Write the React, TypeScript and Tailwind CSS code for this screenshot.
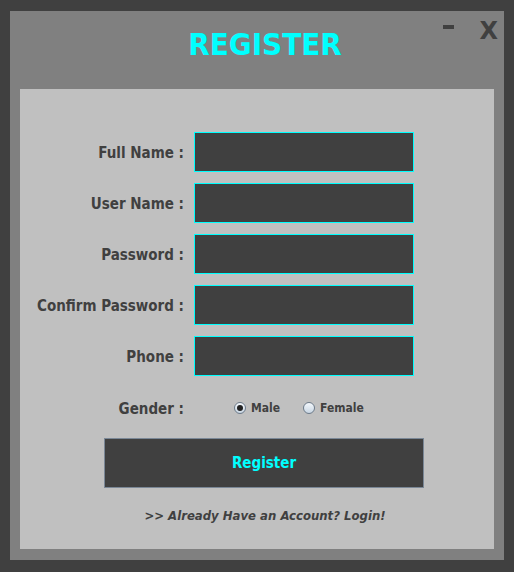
const fields = ["Full Name :", "User Name :", "Password :", "Confirm Password :", "Phone :"];

function Radio({ checked, label }: { checked?: boolean; label: string }) {
  return (
    <div className="flex items-center gap-[5px]">
      <span className="w-[12px] h-[12px] rounded-full border border-[#6d7b8a] bg-gradient-to-b from-[#f4f8fc] to-[#c9d6e3] flex items-center justify-center">
        {checked && <span className="w-[6px] h-[6px] rounded-full bg-[#222]" />}
      </span>
      <span className="text-[12px] font-bold text-[#404040] leading-none">{label}</span>
    </div>
  );
}

export default function App() {
  return (
    <div
      className="w-[514px] h-[572px] bg-[#404040] pt-[11px] pl-[10px]"
      style={{ fontFamily: '"DejaVu Sans Condensed", "DejaVu Sans", sans-serif' }}
    >
      <div className="relative w-[494px] h-[549px] bg-[#808080] px-[10px] pb-[11px] flex flex-col">
        <div className="absolute right-[6px] top-[0px] flex items-start gap-[25px] text-[#404040] font-bold">
          <span className="block w-[11px] h-[4px] bg-[#404040] mt-[14px]" />
          <span className="text-[24px] leading-none mt-[8px] font-['DejaVu_Sans',sans-serif]">X</span>
        </div>
        <div className="h-[78px] flex items-start justify-center pl-[16px]">
          <h1 className="text-[31px] font-bold text-[#00ffff] leading-none mt-[18px]">REGISTER</h1>
        </div>
        <div className="flex-1 bg-[#c0c0c0] pt-[43px] flex flex-col">
          <div className="flex flex-col gap-[11px]">
            {fields.map((f) => (
              <div key={f} className="flex items-center">
                <div className="w-[164px] pt-[2px] text-right text-[15px] font-bold text-[#404040]">{f}</div>
                <div className="ml-[10px] w-[220px] h-[40px] bg-[#404040] border border-[#00ffff]" />
              </div>
            ))}
          </div>
          <div className="flex items-center h-[20px] mt-[22px]">
            <div className="w-[164px] pt-[2px] text-right text-[15px] font-bold text-[#404040]">Gender :</div>
            <div className="ml-[50px] flex items-center gap-[23px]">
              <Radio checked label="Male" />
              <Radio label="Female" />
            </div>
          </div>
          <button className="mt-[20px] ml-[84px] w-[320px] h-[50px] bg-[#404040] border border-[#7a8796] text-[#00ffff] text-[15px] font-bold">
            Register
          </button>
          <div className="mt-[20px] pl-[16px] text-center text-[13px] font-bold italic text-[#404040] leading-[16px]">
            &gt;&gt; Already Have an Account? Login!
          </div>
        </div>
      </div>
    </div>
  );
}
